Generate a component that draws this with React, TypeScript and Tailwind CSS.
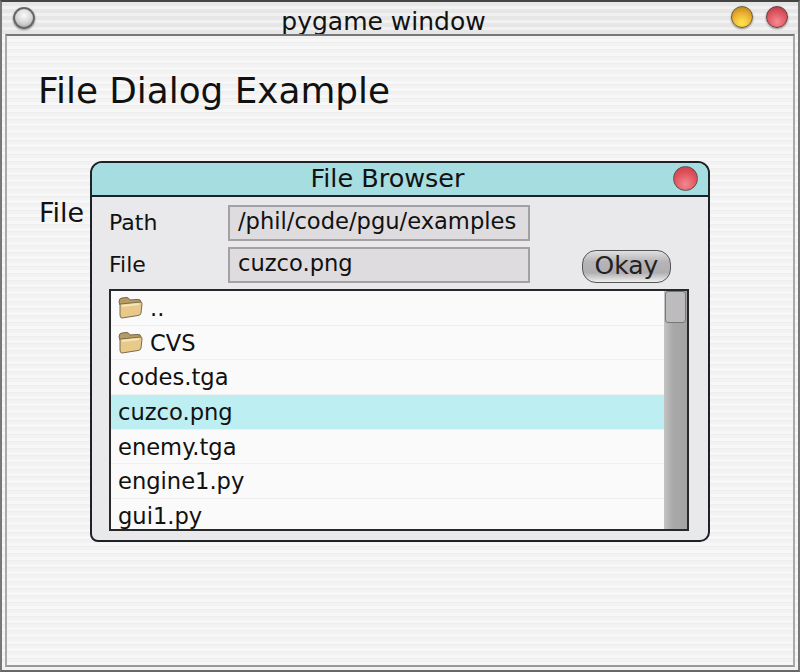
import React from "react";

const stripes =
  "bg-[repeating-linear-gradient(180deg,#f3f2f3_0px,#f3f2f3_3px,#f7f7f7_3px,#f7f7f7_6px,#eeeeee_6px,#eeeeee_7px)]";

function Folder() {
  return (
    <svg width="25" height="24" viewBox="0 0 25 24" className="shrink-0 -mt-[2px]">
      <path d="M1 6 Q1 2 4 2 L9 1.500 Q11 2 12 4 L19 3.500 Q23 3 23 6 L22.500 8 L2 9 Z" fill="#b89a63" stroke="#75664a" strokeWidth="1" />
      <path d="M2 8 L23 6 Q24 6 24 8 L23 17 Q23 19 20 19.500 L4 22 Q2 22 2 19 Z" fill="#e8c98a" stroke="#7d6c4d" strokeWidth="1" />
      <path d="M4 10 L21 8" stroke="#f7e5bb" strokeWidth="2" />
    </svg>
  );
}

function Row({ name, folder, selected }: { name: string; folder?: boolean; selected?: boolean }) {
  return (
    <div className={`h-[34.700px] shrink-0 flex items-center border-b border-[#f0efef] pl-[7px] pt-[2px] ${selected ? "bg-[#bdeef2]" : ""}`}>
      {folder && <Folder />}
      <span className={folder ? "ml-[7px]" : ""}>{name}</span>
    </div>
  );
}

export default function App() {
  return (
    <div className={`w-[800px] h-[672px] flex flex-col overflow-hidden border-t-2 border-l-2 border-r-2 border-b-2 border-t-[#444] border-l-[#777] border-r-[#777] border-b-[#666] text-[#111] ${stripes}`} style={{ fontFamily: '"DejaVu Sans", sans-serif' }}>
      {/* Title bar */}
      <div className="h-[32px] shrink-0 flex items-center pl-[11px] pr-[1px] bg-[repeating-linear-gradient(180deg,#e6e6e6_0px,#e6e6e6_4px,#f1f1f1_4px,#f1f1f1_7px)]">
        <div className="w-[22px] h-[22px] rounded-full border-2 border-[#666] bg-[radial-gradient(circle_at_50%_35%,#fafafa_0%,#d8d8d8_50%,#999_100%)] shadow-[0_1px_2px_#888]" />
        <div className="flex-1 text-center text-[25px] leading-none pl-[1px] pt-[6px]">pygame window</div>
        <div className="w-[22px] h-[22px] -mt-[3px] rounded-full border border-[#6b5a2a] bg-[radial-gradient(circle_at_50%_80%,#ffe94f_0%,#eeb233_50%,#b07c1c_100%)] shadow-[0_1px_2px_#888]" />
        <div className="w-[22px] h-[22px] -mt-[3px] rounded-full border border-[#6b3a3a] ml-[13px] mr-[9px] bg-[radial-gradient(circle_at_50%_75%,#f58a93_0%,#df5560_55%,#a53a44_100%)] shadow-[0_1px_2px_#888]" />
      </div>

      {/* Client area */}
      <div className={`flex-1 mx-[3px] mb-[3px] border-2 border-t-[#777] border-l-[#aaa] border-r-[#aaa] border-b-[#999] ${stripes}`}>
        <h1 className="ml-[31px] mt-[33px] text-[35.800px] leading-[44px]">File Dialog Example</h1>

        <div className="flex items-start mt-[48px] ml-[32px]">
          <span className="text-[27px] leading-[28px] mt-[38px] w-[52px] shrink-0">File</span>

          {/* File browser dialog */}
          <div className="-ml-[1px] w-[620px] h-[381px] flex flex-col border-2 border-[#1c2226] rounded-tl-[12px] rounded-tr-[12px] rounded-bl-[8px] rounded-br-[10px] overflow-hidden bg-[#e9e8ea]">
            <div className="h-[34px] shrink-0 flex items-center border-b-2 border-[#16242a] bg-[#a6dde0]">
              <div className="flex-1 text-center text-[25.500px] leading-none pl-[10px]">File Browser</div>
              <div className="w-[25px] h-[25px] -mt-[1px] rounded-full border border-[#555] mr-[10px] bg-[radial-gradient(circle_at_50%_75%,#f08a92_0%,#e0525c_55%,#c23c48_100%)]" />
            </div>

            <div className="flex-1 flex flex-col pl-[17px] pt-[8px]">
              <div className="flex items-center h-[36px] text-[22.600px]">
                <span className="w-[119px] text-[22px] pb-[2px]">Path</span>
                <div className="w-[302px] h-[36px] flex items-center pl-[8px] pb-[2px] border-2 border-[#a3a1a4] bg-[#dedcde]">/phil/code/pgu/examples</div>
              </div>
              <div className="flex items-center h-[36px] text-[22.600px] mt-[6px]">
                <span className="w-[119px] text-[22px] pb-[2px]">File</span>
                <div className="w-[302px] h-[36px] flex items-center pl-[8px] pb-[2px] border-2 border-[#a3a1a4] bg-[#dedcde]">cuzco.png</div>
                <button className="w-[89px] h-[33px] ml-[52px] mt-[2px] pb-[2px] rounded-[14px] border border-[#555] text-[25px] leading-none text-[#222] bg-[linear-gradient(180deg,#e0e0e0_0%,#b6b4b6_35%,#b0aeb0_70%,#f0f0f0_100%)]">Okay</button>
              </div>

              {/* File list */}
              <div className="w-[580px] h-[242px] mt-[6px] flex border-2 border-[#26292c] bg-[#fbfafa] text-[22.600px]">
                <div className="flex-1 flex flex-col overflow-hidden">
                  <Row name=".." folder />
                  <Row name="CVS" folder />
                  <Row name="codes.tga" />
                  <Row name="cuzco.png" selected />
                  <Row name="enemy.tga" />
                  <Row name="engine1.py" />
                  <Row name="gui1.py" />
                </div>
                <div className="w-[23px] shrink-0 bg-[linear-gradient(90deg,#c4c4c4_0%,#a8a8a8_40%,#a4a4a4_100%)]">
                  <div className="h-[32px] mx-[1px] rounded-[3px] border border-[#777] bg-[#bdbbbd]" />
                </div>
              </div>
            </div>
          </div>
        </div>
      </div>
    </div>
  );
}
